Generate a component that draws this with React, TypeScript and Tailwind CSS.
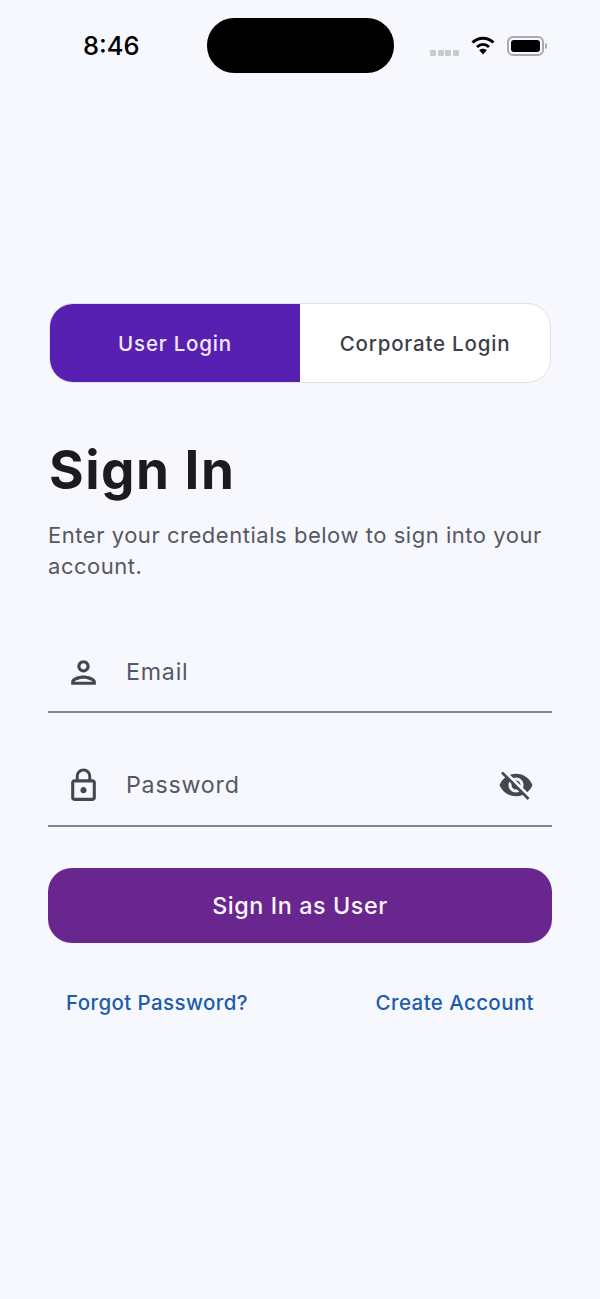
import { MdLockOutline, MdOutlinePerson, MdVisibilityOff } from "react-icons/md";

const StatusBar = () => (
  <div className="h-[91px] px-[83px] pt-[18px] flex items-start justify-between relative">
    <span className="mt-[12px] text-[25.5px] leading-[32px] font-medium text-black">8:46</span>
    <div className="absolute left-[207px] top-[18px] w-[187px] h-[55px] rounded-[27px] bg-black" />
    <div className="absolute left-[430px] top-[36px] flex items-center">
      <div className="mt-[13px] flex gap-[1.5px]">
        <span className="w-[6px] h-[6px] rounded-[1px] bg-[#c9cacd]" />
        <span className="w-[6px] h-[6px] rounded-[1px] bg-[#c9cacd]" />
        <span className="w-[6px] h-[6px] rounded-[1px] bg-[#c9cacd]" />
        <span className="w-[6px] h-[6px] rounded-[1px] bg-[#c9cacd]" />
      </div>
      <svg className="ml-[12.5px]" width="24" height="20" viewBox="0 0 24 20">
        <path d="M1.5 6.5C7.5 .8 16.5 .8 22.5 6.5" fill="none" stroke="#000" strokeWidth="3" />
        <path d="M6 11c3.6-3.3 8.4-3.3 12 0" fill="none" stroke="#000" strokeWidth="3" />
        <path d="M8.2 14.2c2.2-2 5.4-2 7.6 0L12 18.5z" fill="#000" />
      </svg>
      <div className="ml-[12px] w-[37px] h-[20px] rounded-[6px] border-2 border-[#a9aaad] p-[2px] flex">
        <div className="flex-1 rounded-[3px] bg-black" />
      </div>
      <div className="ml-[1px] w-[2px] h-[6px] rounded-r-full bg-[#a9aaad]" />
    </div>
  </div>
);

const App = () => {
  return (
    <div className="w-[600px] h-[1299px] overflow-hidden bg-[#f7f8fd] font-['Inter',sans-serif]">
      <StatusBar />
      <div className="px-[48px] pt-[212px]">
        <div className="mx-px h-[80px] flex rounded-[24px] overflow-hidden border border-[#e1e2e8] bg-white">
          <div className="w-1/2 bg-[#5720b0] flex items-center justify-center pt-[2px] text-[20.5px] font-medium tracking-[0.8px] text-[#f1e8fb]">
            User Login
          </div>
          <div className="w-1/2 flex items-center justify-center pt-[2px] text-[20.5px] font-medium tracking-[0.8px] text-[#3c4049]">
            Corporate Login
          </div>
        </div>
        <h1 className="mt-[55px] ml-px text-[53px] leading-[64px] font-bold tracking-[1.5px] text-[#1c1b20]">
          Sign In
        </h1>
        <p className="mt-[18px] text-[22px] leading-[31px] tracking-[0.53px] text-[#555862]">
          Enter your credentials below to sign into your account.
        </p>

        <div className="mt-[51px] h-[80px] flex items-center border-b-2 border-[#85868c]">
          <MdOutlinePerson className="ml-[17px] text-[#45464e]" size={37} />
          <span className="ml-[24px] text-[23.2px] tracking-[0.8px] text-[#555862]">Email</span>
        </div>
        <div className="mt-[32px] h-[82px] flex items-center border-b-2 border-[#85868c]">
          <MdLockOutline className="ml-[17px] text-[#45464e]" size={37} />
          <span className="ml-[24px] pt-px text-[23.2px] tracking-[0.8px] text-[#555862]">Password</span>
          <MdVisibilityOff className="ml-auto mr-[18px] text-[#45464e]" size={36} />
        </div>

        <div className="mt-[41px] h-[75px] rounded-[24px] bg-[#69268f] flex items-center justify-center pt-[2px] text-[23.3px] font-medium tracking-[0.6px] text-[#fbf7fd]">
          Sign In as User
        </div>

        <div className="mt-[45px] px-[18px] flex justify-between text-[20.5px] font-medium tracking-[0.4px] text-[#1b5cae]">
          <span>Forgot Password?</span>
          <span>Create Account</span>
        </div>
      </div>
    </div>
  );
};

export default App;
